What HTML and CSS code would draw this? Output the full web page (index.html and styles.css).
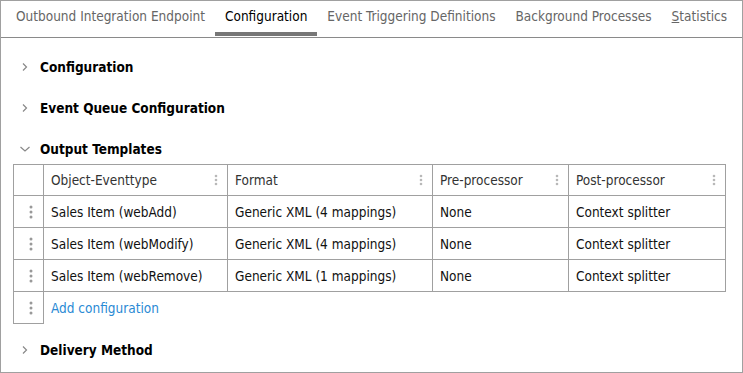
FILE: index.html
```html
<!DOCTYPE html>
<html>
<head>
	<title>Outbound Integration Endpoint</title>
	<meta charset="utf-8">
	<link rel="stylesheet" href="styles.css">
</head>
<body>
	<div class="window">
		<div class="tabs">
			<div class="tab">Outbound Integration Endpoint</div>
			<div class="tab active">Configuration</div>
			<div class="tab">Event Triggering Definitions</div>
			<div class="tab">Background Processes</div>
			<div class="tab"><u>S</u>tatistics</div>
		</div>

		<div class="content">
			<div class="section-head">
				<svg class="chevron" width="8" height="10" viewBox="0 0 8 10"><path d="M2 1.5 L5.5 5 L2 8.5" fill="none" stroke="#888" stroke-width="1.2"/></svg>
				<span>Configuration</span>
			</div>

			<div class="section-head">
				<svg class="chevron" width="8" height="10" viewBox="0 0 8 10"><path d="M2 1.5 L5.5 5 L2 8.5" fill="none" stroke="#888" stroke-width="1.2"/></svg>
				<span>Event Queue Configuration</span>
			</div>

			<div class="section-head open">
				<svg class="chevron" width="12" height="10" viewBox="0 0 12 10"><path d="M1.5 3 L6 7 L10.5 3" fill="none" stroke="#888" stroke-width="1.2"/></svg>
				<span>Output Templates</span>
			</div>

			<table class="grid">
				<colgroup>
					<col class="c-handle">
					<col class="c-type">
					<col class="c-format">
					<col class="c-pre">
					<col class="c-post">
				</colgroup>
				<thead>
					<tr>
						<th></th>
						<th><div class="th-inner">Object-Eventtype<svg class="kebab" width="4" height="12" viewBox="0 0 4 12"><circle cx="2" cy="2" r="1.3"/><circle cx="2" cy="6" r="1.3"/><circle cx="2" cy="10" r="1.3"/></svg></div></th>
						<th><div class="th-inner">Format<svg class="kebab" width="4" height="12" viewBox="0 0 4 12"><circle cx="2" cy="2" r="1.3"/><circle cx="2" cy="6" r="1.3"/><circle cx="2" cy="10" r="1.3"/></svg></div></th>
						<th><div class="th-inner">Pre-processor<svg class="kebab" width="4" height="12" viewBox="0 0 4 12"><circle cx="2" cy="2" r="1.3"/><circle cx="2" cy="6" r="1.3"/><circle cx="2" cy="10" r="1.3"/></svg></div></th>
						<th><div class="th-inner">Post-processor<svg class="kebab" width="4" height="12" viewBox="0 0 4 12"><circle cx="2" cy="2" r="1.3"/><circle cx="2" cy="6" r="1.3"/><circle cx="2" cy="10" r="1.3"/></svg></div></th>
					</tr>
				</thead>
				<tbody>
					<tr>
						<td class="handle"><svg width="4" height="14" viewBox="0 0 4 14"><circle cx="2" cy="2" r="1.5"/><circle cx="2" cy="7" r="1.5"/><circle cx="2" cy="12" r="1.5"/></svg></td>
						<td>Sales Item (webAdd)</td>
						<td>Generic XML (4 mappings)</td>
						<td>None</td>
						<td>Context splitter</td>
					</tr>
					<tr>
						<td class="handle"><svg width="4" height="14" viewBox="0 0 4 14"><circle cx="2" cy="2" r="1.5"/><circle cx="2" cy="7" r="1.5"/><circle cx="2" cy="12" r="1.5"/></svg></td>
						<td>Sales Item (webModify)</td>
						<td>Generic XML (4 mappings)</td>
						<td>None</td>
						<td>Context splitter</td>
					</tr>
					<tr>
						<td class="handle"><svg width="4" height="14" viewBox="0 0 4 14"><circle cx="2" cy="2" r="1.5"/><circle cx="2" cy="7" r="1.5"/><circle cx="2" cy="12" r="1.5"/></svg></td>
						<td>Sales Item (webRemove)</td>
						<td>Generic XML (1 mappings)</td>
						<td>None</td>
						<td>Context splitter</td>
					</tr>
					<tr class="add-row">
						<td class="handle"><svg width="4" height="14" viewBox="0 0 4 14"><circle cx="2" cy="2" r="1.5"/><circle cx="2" cy="7" r="1.5"/><circle cx="2" cy="12" r="1.5"/></svg></td>
						<td colspan="4"><a href="#" class="add-link">Add configuration</a></td>
					</tr>
				</tbody>
			</table>

			<div class="section-head last">
				<svg class="chevron" width="8" height="10" viewBox="0 0 8 10"><path d="M2 1.5 L5.5 5 L2 8.5" fill="none" stroke="#888" stroke-width="1.2"/></svg>
				<span>Delivery Method</span>
			</div>
		</div>
	</div>
</body>
</html>
```

FILE: styles.css
```css
body {
	margin: 0;
	padding: 0;
	font-family: "DejaVu Sans Condensed", "DejaVu Sans", sans-serif;
	font-size: 13.5px;
	color: #111111;
	background-color: #ffffff;
}

.window {
	width: 743px;
	height: 373px;
	box-sizing: border-box;
	border: 1px solid #a0a0a0;
	overflow: hidden;
}

.tabs {
	display: flex;
	align-items: flex-start;
	height: 36px;
	padding-left: 5px;
	border-bottom: 1px solid #8a8a8a;
	white-space: nowrap;
}

.tab {
	height: 35px;
	box-sizing: border-box;
	padding: 7px 10px 0 10px;
	line-height: 16px;
	color: #666666;
	border-bottom: 4px solid transparent;
}

.tab.active {
	color: #000000;
	border-bottom-color: #777777;
}

.content {
	padding: 19px 0 0 12px;
}

.section-head {
	display: flex;
	align-items: center;
	height: 20px;
	margin-bottom: 21px;
	font-weight: bold;
	color: #000000;
}

.section-head .chevron {
	margin-left: 8px;
	margin-right: 11px;
}

.section-head.open {
	margin-bottom: 5px;
}

.section-head.open .chevron {
	margin-left: 6px;
	margin-right: 9px;
}

.section-head.last {
	margin-top: 16px;
}

.grid {
	border-collapse: collapse;
	table-layout: fixed;
	width: 713px;
}

.c-handle { width: 30px; }
.c-type { width: 184px; }
.c-format { width: 205px; }
.c-pre { width: 136px; }
.c-post { width: 157px; }

.grid th, .grid td {
	height: 31px;
	padding: 0 7px;
	border: 1px solid #a0a0a0;
	text-align: left;
	font-weight: normal;
	white-space: nowrap;
	overflow: hidden;
}

.grid th {
	height: 30px;
	color: #333333;
}

.th-inner {
	display: flex;
	align-items: center;
	justify-content: space-between;
}

.kebab {
	fill: #b8b8b8;
	margin-right: 2px;
}

.grid td.handle {
	padding: 0 0 0 15px;
}

.handle svg {
	display: block;
	fill: #999999;
}

.add-row td {
	border: none;
}

.add-row td.handle {
	border: 1px solid #a0a0a0;
}

.add-link {
	color: #2a8ad4;
	text-decoration: none;
}
```
